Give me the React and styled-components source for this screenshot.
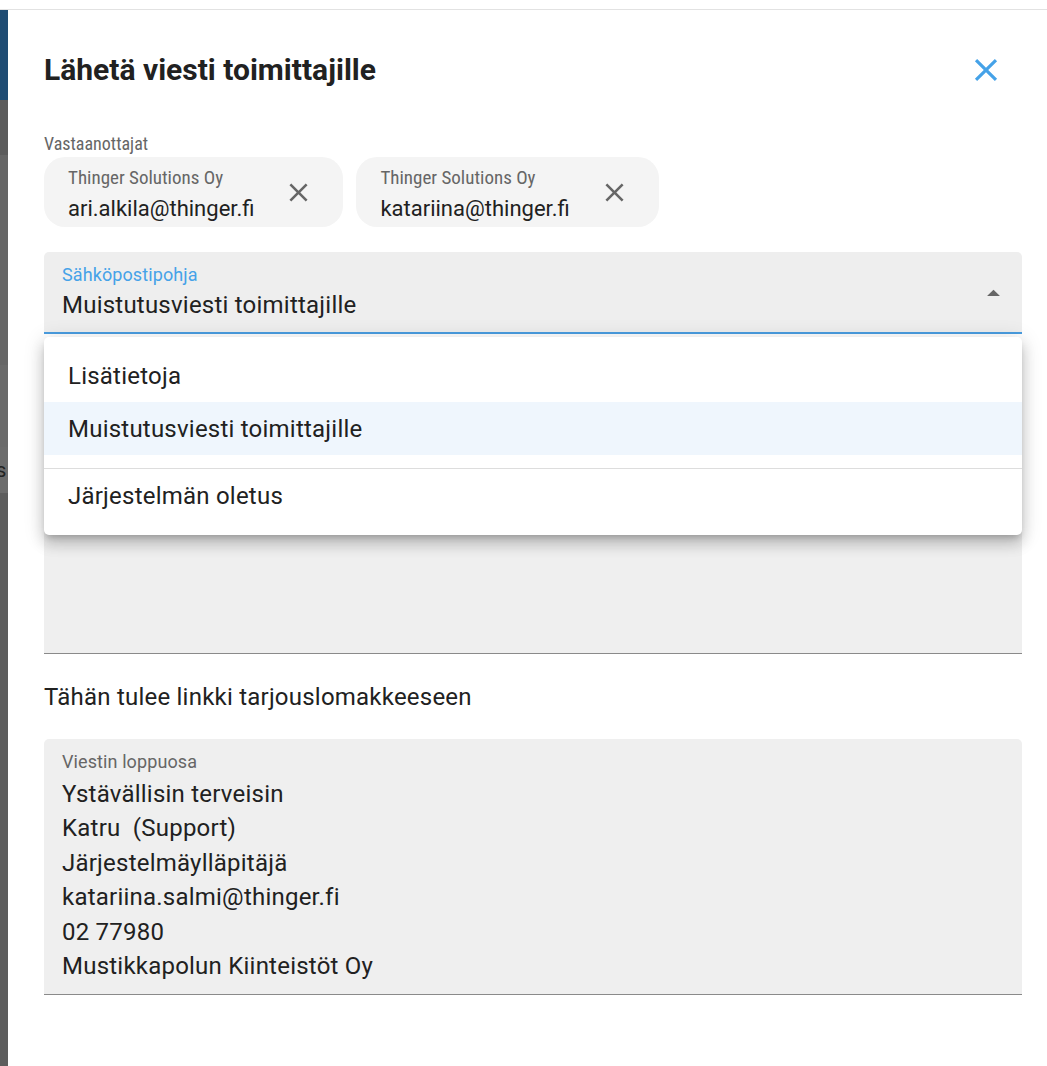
import React from 'react';
import styled, { createGlobalStyle } from 'styled-components';

const GlobalStyle = createGlobalStyle`
  html, body {
    margin: 0;
    padding: 0;
    background: #ffffff;
    font-family: Roboto, "Liberation Sans", Arial, sans-serif;
    color: #212121;
  }
  * { box-sizing: border-box; }
`;

const CLOSE_PATH =
  'M19 6.41L17.59 5 12 10.59 6.41 5 5 6.41 10.59 12 5 17.59 6.41 19 12 13.41 17.59 19 19 17.59 13.41 12z';

const recipients = [
  { company: 'Thinger Solutions Oy', email: 'ari.alkila@thinger.fi' },
  { company: 'Thinger Solutions Oy', email: 'katariina@thinger.fi' },
];

const templates = [
  { label: 'Lisätietoja' },
  { label: 'Muistutusviesti toimittajille', selected: true },
  { divider: true },
  { label: 'Järjestelmän oletus' },
];

const signature = [
  'Ystävällisin terveisin',
  'Katru  (Support)',
  'Järjestelmäylläpitäjä',
  'katariina.salmi@thinger.fi',
  '02 77980',
  'Mustikkapolun Kiinteistöt Oy',
];

const Close = ({ size, color }) => (
  <svg width={size} height={size} viewBox="0 0 24 24">
    <path d={CLOSE_PATH} fill={color} />
  </svg>
);

const App = () => {
  return (
    <>
      <GlobalStyle />
      <Page>
        <TopBar />
        <Body>
          <Backdrop>
            <Strip $color="#1f4c73" $h={90} />
            <Strip $color="#5c5c5c" $h={55} />
            <Strip $color="#666666" $h={210} />
            <Strip $color="#6a6a6a" $h={82} />
            <Strip $color="#6c6c6c" $h={46}>s</Strip>
            <Strip $color="#5d5d5d" $grow />
          </Backdrop>
          <Dialog>
            <Header>
              <Title>Lähetä viesti toimittajille</Title>
              <IconButton>
                <Close size={38} color="#45a2e8" />
              </IconButton>
            </Header>

            <SmallLabel>Vastaanottajat</SmallLabel>
            <Chips>
              {recipients.map((r) => (
                <Chip key={r.email}>
                  <ChipText>
                    <ChipCompany>{r.company}</ChipCompany>
                    <ChipEmail>{r.email}</ChipEmail>
                  </ChipText>
                  <ChipRemove>
                    <Close size={31} color="#666666" />
                  </ChipRemove>
                </Chip>
              ))}
            </Chips>

            <SelectWrap>
              <SelectField>
                <FieldLabel $focused>Sähköpostipohja</FieldLabel>
                <SelectValue>Muistutusviesti toimittajille</SelectValue>
                <Arrow>
                  <svg width="31" height="31" viewBox="0 0 24 24">
                    <path d="M7 14l5-5 5 5z" fill="#666666" />
                  </svg>
                </Arrow>
              </SelectField>
              <Menu>
                {templates.map((t, i) =>
                  t.divider ? (
                    <Divider key={i} />
                  ) : (
                    <MenuItem key={i} $selected={t.selected}>
                      {t.label}
                    </MenuItem>
                  )
                )}
              </Menu>
              <TextArea $height={302} />
            </SelectWrap>

            <Paragraph>Tähän tulee linkki tarjouslomakkeeseen</Paragraph>

            <TextArea>
              <FieldLabel>Viestin loppuosa</FieldLabel>
              <Lines>
                {signature.map((line) => (
                  <Line key={line}>{line}</Line>
                ))}
              </Lines>
            </TextArea>
          </Dialog>
        </Body>
      </Page>
    </>
  );
};

const Page = styled.div`
  width: 1047px;
  height: 1066px;
  display: flex;
  flex-direction: column;
  overflow: hidden;
`;

const TopBar = styled.div`
  height: 10px;
  flex-shrink: 0;
  background: #ffffff;
  border-bottom: 1px solid #e2e2e2;
`;

const Body = styled.div`
  flex: 1;
  display: flex;
`;

const Backdrop = styled.div`
  width: 8px;
  display: flex;
  flex-direction: column;
  overflow: hidden;
`;

const Strip = styled.div`
  height: ${(p) => (p.$grow ? 'auto' : `${p.$h}px`)};
  flex: ${(p) => (p.$grow ? 1 : 'none')};
  background: ${(p) => p.$color};
  color: #222;
  font-size: 20px;
  line-height: 46px;
  text-indent: -4px;
`;

const Dialog = styled.div`
  flex: 1;
  background: #ffffff;
  padding: 0 25px 0 36px;
  display: flex;
  flex-direction: column;
`;

const Header = styled.div`
  height: 120px;
  display: flex;
  align-items: center;
  justify-content: space-between;
  padding-bottom: 2px;
`;

const Title = styled.h2`
  margin: 0;
  font-size: 30px;
  font-weight: 700;
  color: #212121;
`;

const IconButton = styled.div`
  display: flex;
  margin-right: 17px;
  margin-top: 1px;
`;

const SmallLabel = styled.div`
  font-stretch: 76%;
  font-size: 18px;
  color: #666666;
  line-height: 20px;
  margin-top: 4px;
`;

const Chips = styled.div`
  display: flex;
  gap: 13px;
  margin-top: 3px;
`;

const Chip = styled.div`
  height: 70px;
  background: #f4f4f4;
  border-radius: 21px;
  display: flex;
  align-items: center;
  padding: 0 29px 0 24px;
  gap: 29px;
`;

const ChipText = styled.div`
  display: flex;
  flex-direction: column;
  padding-top: 6px;
`;

const ChipCompany = styled.span`
  font-size: 19px;
  font-stretch: 79%;
  color: #666666;
  line-height: 24px;
`;

const ChipEmail = styled.span`
  font-size: 22px;
  font-stretch: 88%;
  color: #212121;
  line-height: 30px;
  margin-top: 4px;
`;

const ChipRemove = styled.div`
  display: flex;
`;

const SelectWrap = styled.div`
  position: relative;
  margin-top: 25px;
`;

const SelectField = styled.div`
  position: relative;
  height: 82px;
  background: #eeeeee;
  border-radius: 5px 5px 0 0;
  border-bottom: 2px solid #4a9de0;
  padding: 13px 18px 0;
`;

const FieldLabel = styled.div`
  font-size: 18px;
  line-height: 20px;
  letter-spacing: 0.1px;
  color: ${(p) => (p.$focused ? '#45a2e8' : '#666666')};
`;

const SelectValue = styled.div`
  font-size: 24px;
  line-height: 30px;
  letter-spacing: 0.225px;
  margin-top: 5px;
  color: #212121;
`;

const Arrow = styled.div`
  position: absolute;
  right: 13px;
  top: 26px;
  display: flex;
`;

const Menu = styled.div`
  position: absolute;
  top: 85px;
  left: 0;
  right: 0;
  z-index: 2;
  background: #ffffff;
  border-radius: 5px;
  padding: 12px 0 13px;
  box-shadow: 0 5px 6px -3px rgba(0, 0, 0, 0.2), 0 9px 14px 1px rgba(0, 0, 0, 0.14),
    0 3px 20px 2px rgba(0, 0, 0, 0.12);
`;

const MenuItem = styled.div`
  height: 53px;
  display: flex;
  align-items: center;
  padding: 0 24px;
  font-size: 24px;
  letter-spacing: 0.225px;
  color: #212121;
  background: ${(p) => (p.$selected ? '#eff6fd' : 'transparent')};
`;

const Divider = styled.div`
  height: 1px;
  background: #dddddd;
  margin: 13px 0 0;
`;

const TextArea = styled.div`
  min-height: ${(p) => (p.$height ? `${p.$height}px` : 'auto')};
  margin-top: ${(p) => (p.$height ? '18px' : '0')};
  background: #efefef;
  border-radius: 5px 5px 0 0;
  border-bottom: 1px solid #8a8a8a;
  padding: 13px 18px 11px;
`;

const Paragraph = styled.p`
  margin: 29px 0 28px;
  font-size: 24px;
  line-height: 28px;
  letter-spacing: 0.225px;
  color: #212121;
`;

const Lines = styled.div`
  margin-top: 5px;
`;

const Line = styled.div`
  font-size: 24px;
  line-height: 34.4px;
  letter-spacing: 0.225px;
  color: #212121;
  white-space: pre;
`;

export default App;
